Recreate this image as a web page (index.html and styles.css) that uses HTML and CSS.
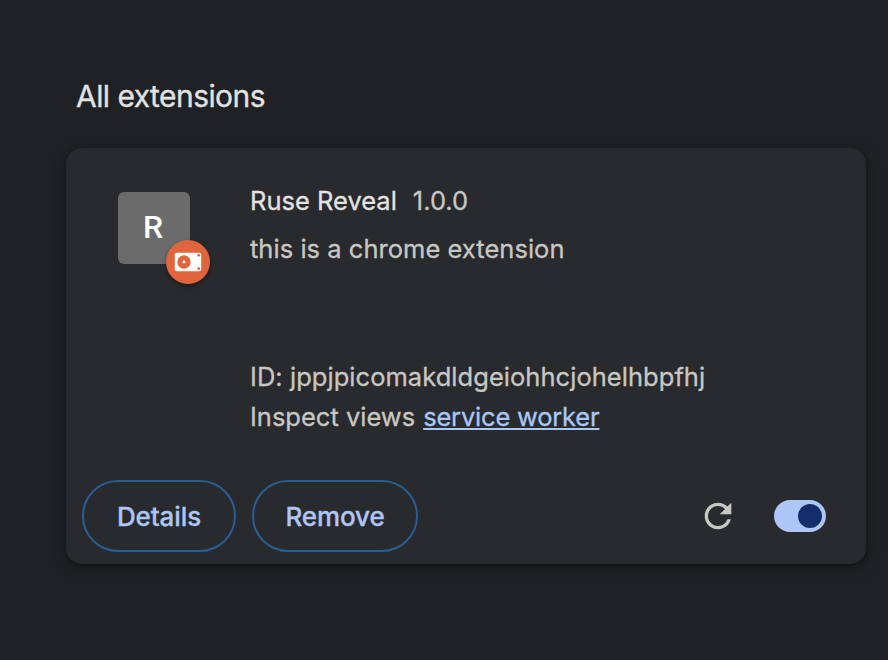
FILE: index.html
```html
<!DOCTYPE html>
<html lang="en">
<head>
<meta charset="utf-8">
<title>Extensions</title>
<link rel="stylesheet" href="styles.css">
</head>
<body>
<main class="page">
  <h1 class="heading"><span>All extensions</span></h1>
  <article class="card">
    <div class="main">
      <div class="icon-wrap">
        <div class="icon">R</div>
        <div class="badge">
          <svg width="28" height="20" viewBox="0 0 28 20" aria-hidden="true">
            <rect x="0.8" y="0.7" width="26.4" height="18.6" rx="2" fill="#fff"/>
            <circle cx="10" cy="10" r="6.7" fill="#e0653c"/>
            <circle cx="10" cy="10" r="1.4" fill="#fff"/>
            <circle cx="24.7" cy="3.3" r="1.4" fill="#e0653c"/>
            <circle cx="24.7" cy="16.7" r="1.4" fill="#e0653c"/>
          </svg>
        </div>
      </div>
      <div class="content">
        <div class="title"><span class="name">Ruse Reveal</span><span class="version">1.0.0</span></div>
        <div class="description"><span>this is a chrome extension</span></div>
        <div class="line"><span class="ext-id">ID: jppjpicomakdldgeiohhcjohelhbpfhj</span></div>
        <div class="line"><span class="views">Inspect views</span><a class="link" href="#">service worker</a></div>
      </div>
    </div>
    <div class="actions">
      <button class="button details"><span>Details</span></button>
      <button class="button remove"><span>Remove</span></button>
      <svg class="reload" width="40" height="40" viewBox="0 0 24 24" aria-label="Reload">
        <path fill="#c7c7c3" d="M17.65 6.35A7.958 7.958 0 0 0 12 4c-4.42 0-7.99 3.58-7.99 8s3.57 8 7.99 8c3.73 0 6.84-2.55 7.73-6h-2.08A5.99 5.99 0 0 1 12 18c-3.31 0-6-2.69-6-6s2.69-6 6-6c1.66 0 3.14.69 4.22 1.78L13 11h7V4z"/>
      </svg>
      <div class="toggle" role="switch" aria-checked="true"><div class="knob"></div></div>
    </div>
  </article>
</main>
</body>
</html>
```

FILE: styles.css
```css
* { box-sizing: border-box; }

body {
  margin: 0;
  background: #202124;
  color: #c7c7c3;
  font-family: Inter, "Liberation Sans", sans-serif;
  font-size: 25.5px;
  -webkit-text-stroke-width: 0.3px;
}

.page {
  height: 660px;
  padding: 72px 22px 0 66px;
  overflow: hidden;
}

.heading {
  height: 48px;
  margin: 0 0 28px 10px;
  color: #e3e3e3;
  font-size: 30px;
  font-weight: 400;
  line-height: 48px;
  letter-spacing: -0.56px;
}

.card {
  display: flex;
  flex-direction: column;
  height: 416px;
  border-radius: 16px;
  background: #292a2d;
  box-shadow: 0 2px 4px rgba(0, 0, 0, 0.3), 0 4px 12px 4px rgba(0, 0, 0, 0.15);
}

.main {
  display: flex;
  flex: 1;
  padding: 33px 16px 0 52px;
}

.icon-wrap {
  position: relative;
  width: 72px;
  height: 72px;
  margin: 11px 60px 0 0;
}

.icon {
  width: 72px;
  height: 72px;
  padding-right: 2px;
  border-radius: 6px;
  background: #6b6b6b;
  color: #fff;
  font-family: Roboto, sans-serif;
  font-size: 32px;
  font-weight: 500;
  line-height: 70px;
  text-align: center;
  -webkit-text-stroke-width: 0;
}

.badge {
  position: absolute;
  left: 48px;
  top: 48px;
  display: flex;
  align-items: center;
  justify-content: center;
  width: 44px;
  height: 44px;
  border-radius: 50%;
  background: #e0653c;
  box-shadow: 0 2px 4px rgba(0, 0, 0, 0.4);
}

.content {
  white-space: nowrap;
}

.title {
  display: flex;
  gap: 16px;
  height: 40px;
  line-height: 40px;
}

.name { color: #e3e3e3; }

.description {
  height: 40px;
  margin: 8px 0 88px;
  line-height: 40px;
  letter-spacing: 0.03px;
}

.line {
  display: flex;
  gap: 8px;
  height: 40px;
  line-height: 40px;
}

.ext-id { letter-spacing: 0.04px; }

.link {
  color: #a8c7fa;
  letter-spacing: -0.2px;
  text-decoration: underline;
  text-decoration-thickness: 2px;
  text-underline-offset: 2px;
  text-decoration-skip-ink: none;
}

.actions {
  display: flex;
  align-items: center;
  height: 96px;
  padding: 0 40px 0 16px;
}

.button {
  height: 72px;
  margin-right: 16px;
  padding: 2px 0 0;
  border: 2px solid #285e94;
  border-radius: 36px;
  background: transparent;
  color: #aec6f6;
  font: 500 26px/66px Inter, "Liberation Sans", sans-serif;
  letter-spacing: -0.1px;
}

.details { width: 154px; }
.remove { width: 166px; }

.reload { margin: 0 36px 0 auto; }

.toggle {
  display: flex;
  justify-content: flex-end;
  width: 52px;
  height: 32px;
  padding: 4px;
  border-radius: 16px;
  background: #adc5f7;
}

.knob {
  width: 24px;
  height: 24px;
  border-radius: 50%;
  background: #132e6b;
}
```
